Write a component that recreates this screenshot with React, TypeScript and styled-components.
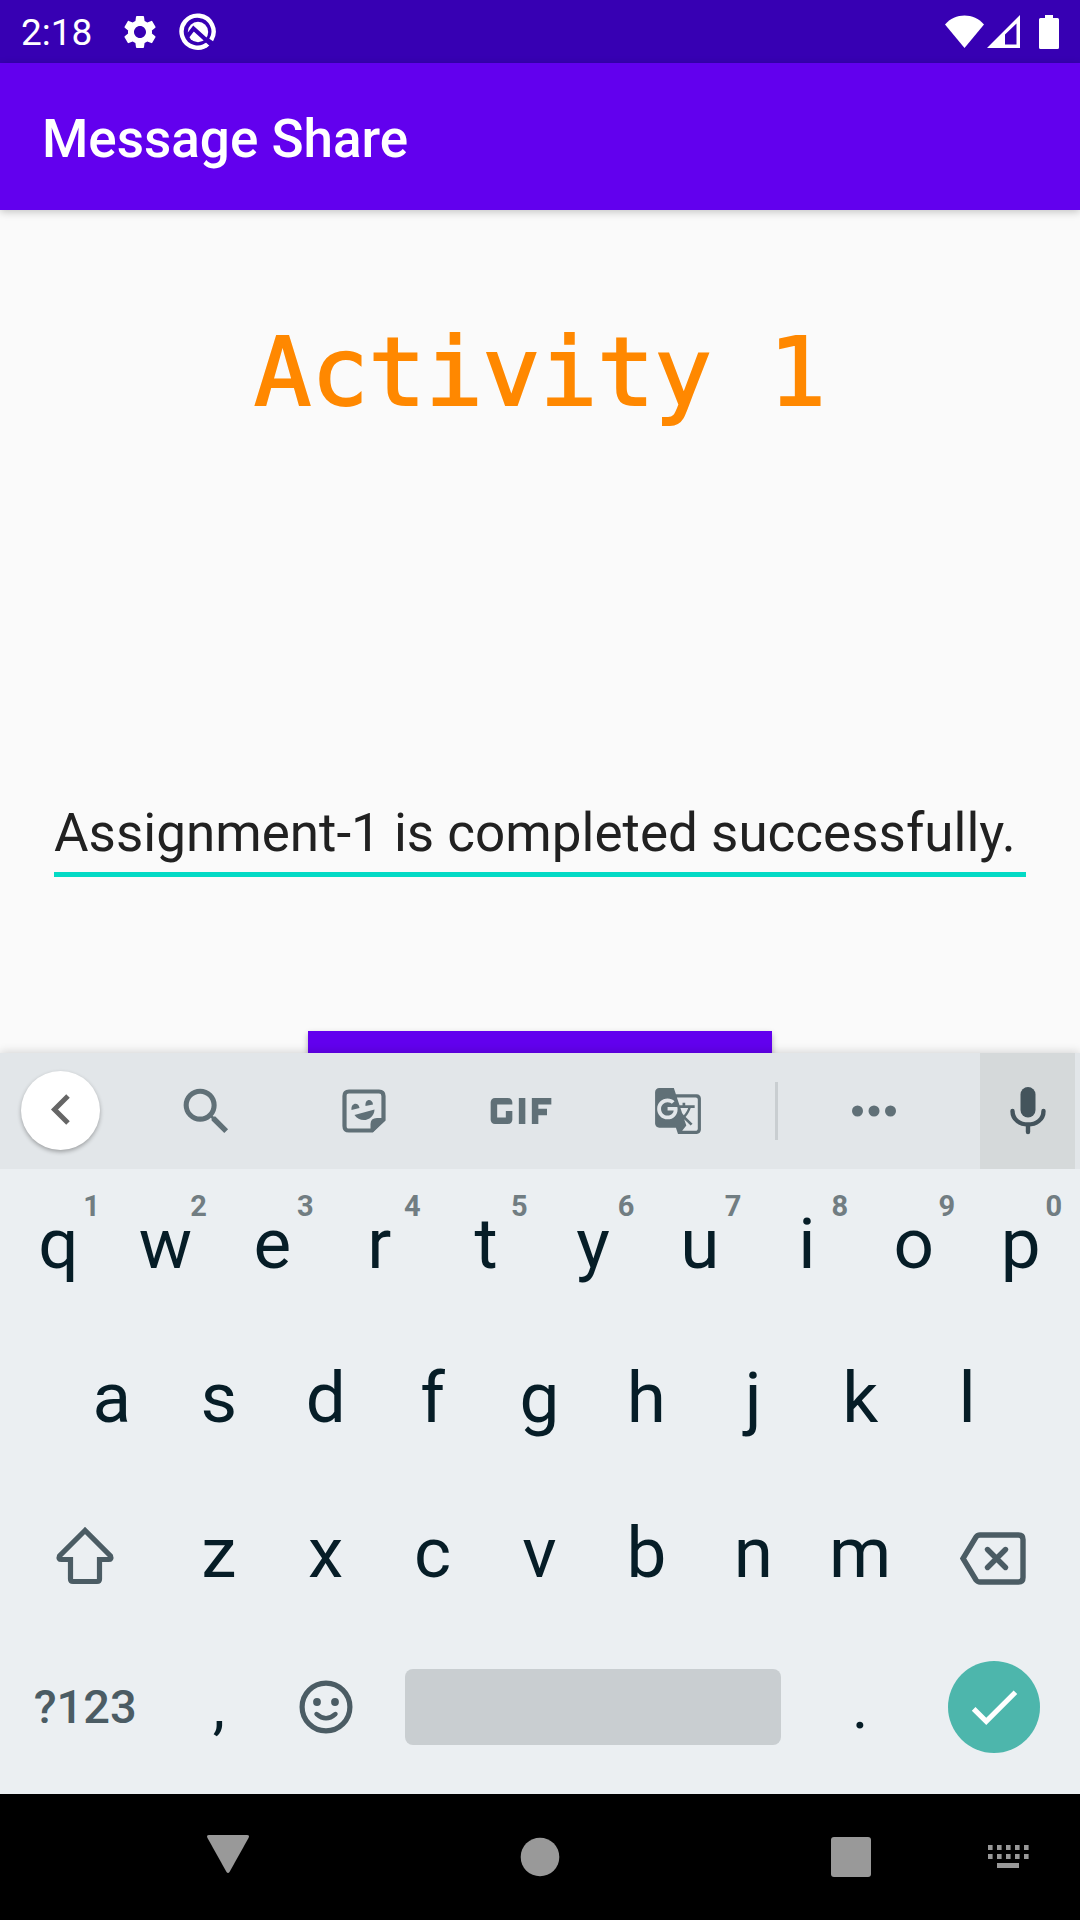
import React, { useState } from "react";
import styled, { createGlobalStyle } from "styled-components";
import { MdCheck, MdGTranslate, MdGif, MdSearch, MdSettings } from "react-icons/md";

const GlobalStyle = createGlobalStyle`
  * { box-sizing: border-box; }
  body { margin: 0; background: #000; }
  button, input { font-family: inherit; }
  svg { display: block; flex: none; }
`;

const Screen = styled.div`
  display: flex;
  flex-direction: column;
  height: 100vh;
  overflow: hidden;
  background: #fafafa;
  font-family: Roboto, "Noto Sans", sans-serif;
`;

const StatusBar = styled.div`
  display: flex;
  flex: none;
  align-items: center;
  height: 63px;
  padding: 0 19px 0 21px;
  background: #3700b3;
  color: #fff;
`;

const Clock = styled.time`
  font-size: 37px;
  line-height: 44px;
  padding-top: 3px;
`;

const StatusIcons = styled.div<{ $end?: boolean }>`
  display: flex;
  align-items: center;
  gap: ${(p) => (p.$end ? "3px" : "19px")};
  margin-left: ${(p) => (p.$end ? "auto" : "28px")};
`;

const AppBar = styled.header`
  position: relative;
  display: flex;
  flex: none;
  align-items: center;
  height: 147px;
  padding: 4px 42px 0;
  background: #6200ee;
  box-shadow: 0 2px 8px rgba(0, 0, 0, 0.22);
`;

const AppTitle = styled.h1`
  margin: 0;
  color: #fff;
  font-size: 53px;
  font-weight: 500;
  line-height: 62px;
`;

const Content = styled.main`
  display: flex;
  flex: 1 1 0;
  flex-direction: column;
  min-height: 0;
  overflow: hidden;
`;

const Heading = styled.h2`
  flex: none;
  margin: 106px 0 0;
  color: #ff8800;
  font-family: "Droid Sans Mono", "DejaVu Sans Mono", monospace;
  font-size: 95px;
  font-weight: 400;
  line-height: 112px;
  text-align: center;
  -webkit-text-stroke: 2px #ff8800;
`;

const MessageField = styled.input`
  flex: none;
  margin: 374px 54px 0;
  padding: 0 0 8px;
  border: 0;
  border-bottom: 5px solid #03dac5;
  border-radius: 0;
  outline: 0;
  background: none;
  color: #212121;
  font-size: 53px;
  line-height: 62px;
  height: 75px;
`;

const SendButton = styled.button`
  flex: none;
  align-self: center;
  width: 43%;
  height: 126px;
  margin-top: 154px;
  border: 0;
  background: #6200ee;
  box-shadow: 0 3px 6px rgba(0, 0, 0, 0.3);
`;

const Keyboard = styled.section`
  position: relative;
  flex: none;
  background: #ebeff2;
  box-shadow: 0 -1px 9px rgba(0, 0, 0, 0.16);
`;

const Toolbar = styled.div`
  display: flex;
  align-items: center;
  height: 116px;
  background: #e2e6e9;
`;

const PlainButton = styled.button`
  display: flex;
  align-items: center;
  justify-content: center;
  padding: 0;
  border: 0;
  background: none;
`;

const CollapseButton = styled(PlainButton)`
  flex: none;
  width: 79px;
  height: 79px;
  margin: 0 28px 2px 21px;
  border-radius: 50%;
  background: #fff;
  box-shadow: 0 2px 4px rgba(0, 0, 0, 0.3);
`;

const Tool = styled(PlainButton)`
  flex: 1 1 0;
  height: 100%;
  color: #607077;
`;

const Divider = styled.span`
  flex: none;
  width: 3px;
  height: 58px;
  margin-left: 18px;
  background: #c9ced1;
`;

const MoreButton = styled(PlainButton)`
  flex: none;
  width: 192px;
  height: 100%;
`;

const MicButton = styled(PlainButton)`
  flex: none;
  width: 95px;
  height: 100%;
  margin: 0 5px 0 10px;
  background: #d5d9da;
`;

const Keys = styled.div`
  display: grid;
  grid-template-rows: repeat(4, 1fr);
  height: 625px;
  padding: 0 6px 7px 5px;
`;

const KeyRow = styled.div<{ $inset?: boolean }>`
  display: flex;
  padding: 0 ${(p) => (p.$inset ? "5%" : "0")};
`;

const Key = styled(PlainButton)<{ $span?: number }>`
  position: relative;
  flex: ${(p) => p.$span ?? 1} 1 0;
  min-width: 0;
  padding-bottom: 5px;
  color: #061d27;
  font-size: 71px;
  line-height: 84px;
`;

const PunctuationKey = styled(Key)`
  font-size: 62px;
`;

const SymbolsKey = styled(Key)`
  color: #4b5c64;
  font-size: 47px;
  font-weight: 500;
`;

const Hint = styled.span`
  position: absolute;
  top: 20px;
  right: 12px;
  color: #717d82;
  font-size: 29px;
  font-weight: 700;
  line-height: 34px;
`;

const SpaceBar = styled.span`
  width: 100%;
  height: 76px;
  margin: 0 26px;
  border-radius: 8px;
  background: #c9ced1;
`;

const EnterCircle = styled.span`
  display: flex;
  align-items: center;
  justify-content: center;
  width: 92px;
  height: 92px;
  border-radius: 50%;
  background: #4db6ac;
  color: #fff;
`;

const NavBar = styled.nav`
  display: grid;
  flex: none;
  grid-template-columns: 144px 1fr 144px;
  height: 126px;
  background: #000;
`;

const NavMain = styled.div`
  display: flex;
  grid-column: 2;
  justify-content: space-between;
  padding: 0 13px 0 12px;
`;

const NavButton = styled(PlainButton)`
  width: 144px;
`;

const ScanIcon = () => (
  <svg width="38" height="38" viewBox="0 0 38 38" fill="none">
    <path d="M29.5 30.3 A16 16 0 1 1 32.2 27" stroke="#fff" strokeWidth="4.4" />
    <circle cx="19" cy="19" r="10.2" fill="#fff" />
    <path d="M8 24 L14.5 15.5 L36 35" stroke="#3700b3" strokeWidth="4.2" />
    <path d="M25.5 33.2 A16 16 0 0 0 27.5 32" stroke="#fff" strokeWidth="4.4" />
  </svg>
);

const WifiIcon = () => (
  <svg width="39" height="34" viewBox="0 0 39 34" fill="#fff">
    <path d="M19.500 33 L0 9.500 C10 -2.500 29 -2.500 39 9.500 Z" />
  </svg>
);

const SignalIcon = () => (
  <svg width="33" height="34" viewBox="0 0 33 34" fill="#fff">
    <path fillRule="evenodd" d="M0 33 L33 0 V33 Z M18 19.500 V29.500 H29.500 V8.500 Z" />
  </svg>
);

const BatteryIcon = () => (
  <svg width="38" height="34" viewBox="0 0 38 34" fill="#fff">
    <path d="M22 0 h8 v3 h4.500 a1.500 1.500 0 0 1 1.500 1.500 v28 a1.500 1.500 0 0 1 -1.500 1.500 h-17 a1.500 1.500 0 0 1 -1.500 -1.500 v-28 a1.500 1.500 0 0 1 1.500 -1.500 h4.500 z" />
  </svg>
);

const ChevronIcon = () => (
  <svg width="40" height="40" viewBox="0 0 40 40" fill="none">
    <path d="M27 6 L13.500 19.500 L27 33" stroke="#666" strokeWidth="5" />
  </svg>
);

const StickerIcon = () => (
  <svg width="44" height="44" viewBox="0 0 44 44">
    <path
      d="M7 2.500 H37 Q41.500 2.500 41.500 7 V30.500 L30 41.500 H7 Q2.500 41.500 2.500 37 V7 Q2.500 2.500 7 2.500 Z"
      fill="none"
      stroke="#607077"
      strokeWidth="4.200"
    />
    <path d="M28.500 42 V35 Q28.500 29 35 29 H42 V31.500 L31 43 Z" fill="#607077" />
    <path d="M9.500 21 C8.500 14 16.500 12.500 17.500 19 Z" fill="#607077" />
    <path d="M23.500 17 C22.500 9.500 30.500 9 31 15.500 Z" fill="#607077" />
    <path d="M12.500 26 L32.500 20.500 C32 32 18 34.500 12.500 26 Z" fill="#607077" />
  </svg>
);

const MoreIcon = () => (
  <svg width="44" height="12" viewBox="0 0 44 12" fill="#607077">
    <circle cx="5.500" cy="6" r="5.500" />
    <circle cx="22" cy="6" r="5.500" />
    <circle cx="38.500" cy="6" r="5.500" />
  </svg>
);

const MicIcon = () => (
  <svg width="36" height="48" viewBox="0 0 36 48" fill="none">
    <rect x="10.500" y="0" width="15" height="30.500" rx="7.500" fill="#44545c" />
    <path
      d="M2.500 24 C2.500 42 33.500 42 33.500 24 M18 38 V45"
      stroke="#44545c"
      strokeWidth="4.400"
      strokeLinecap="round"
    />
  </svg>
);

const ShiftIcon = () => (
  <svg width="60" height="64" viewBox="0 0 60 64" fill="none">
    <path
      d="M30 9.500 L4.500 35 Q3 38.500 6.500 38.500 H15.500 V58 Q15.500 60.500 18 60.500 H42 Q44.500 60.500 44.500 58 V38.500 H53.500 Q57 38.500 55.500 35 Z"
      stroke="#4b5c64"
      strokeWidth="5.200"
    />
  </svg>
);

const BackspaceIcon = () => (
  <svg width="68" height="66" viewBox="1 0 68 66" fill="none" stroke="#4b5c64" strokeWidth="5.400">
    <path d="M21 15 H59.500 Q64 15 64 19.500 V57.500 Q64 62 59.500 62 H21 Q18.500 62 17 60 L4 38.500 L17 17 Q18.500 15 21 15 Z" />
    <path d="M28.500 29.500 L46.500 47.500 M46.500 29.500 L28.500 47.500" strokeLinecap="round" />
  </svg>
);

const SmileIcon = () => (
  <svg width="54" height="54" viewBox="0 0 54 54" fill="none">
    <circle cx="27" cy="27" r="23.900" stroke="#4b5c64" strokeWidth="5.200" />
    <circle cx="18" cy="22" r="3.900" fill="#4b5c64" />
    <circle cx="36" cy="22" r="3.900" fill="#4b5c64" />
    <path d="M17.500 34 Q27 42.500 36.500 34" stroke="#4b5c64" strokeWidth="4.400" strokeLinecap="round" />
  </svg>
);

const BackIcon = () => (
  <svg width="44" height="44" viewBox="0 0 44 44" fill="#999">
    <path d="M3 0 H41 Q44 0 42.500 3 L23.500 37 Q22 39 20.500 37 L1.500 3 Q0 0 3 0 Z" />
  </svg>
);

const HomeIcon = () => (
  <svg width="40" height="40" viewBox="0 0 40 40" fill="#999">
    <circle cx="20" cy="20" r="19.300" />
  </svg>
);

const RecentsIcon = () => (
  <svg width="40" height="40" viewBox="0 0 40 40" fill="#999">
    <rect width="40" height="40" rx="3" />
  </svg>
);

const KeyboardIcon = () => (
  <svg width="42" height="24" viewBox="0 0 42 24" fill="#999">
    {[0, 9].map((y) =>
      [0, 9, 18, 27, 36].map((x) => <rect key={`${x}-${y}`} x={x + 1} y={y} width="4.600" height="5" />)
    )}
    <rect x="10" y="18" width="22" height="5" />
  </svg>
);

export default function App() {
  const [message, setMessage] = useState("Assignment-1 is completed successfully.");
  const type = (text: string) => setMessage((current) => current + text);

  const letterKeys = (letters: string, hints = "") =>
    letters.split("").map((letter, i) => (
      <Key key={letter} type="button" onClick={() => type(letter)}>
        {letter}
        {hints[i] && <Hint>{hints[i]}</Hint>}
      </Key>
    ));

  return (
    <Screen>
      <GlobalStyle />
      <StatusBar>
        <Clock>2:18</Clock>
        <StatusIcons>
          <MdSettings size={40} />
          <ScanIcon />
        </StatusIcons>
        <StatusIcons $end>
          <WifiIcon />
          <SignalIcon />
          <BatteryIcon />
        </StatusIcons>
      </StatusBar>
      <AppBar>
        <AppTitle>Message Share</AppTitle>
      </AppBar>

      <Content>
        <Heading>Activity 1</Heading>
        <MessageField
          aria-label="Message"
          type="text"
          value={message}
          onChange={(e) => setMessage(e.target.value)}
        />
        <SendButton type="button" aria-label="Send" />
      </Content>

      <Keyboard aria-label="Keyboard">
        <Toolbar>
          <CollapseButton type="button" aria-label="Collapse toolbar">
            <ChevronIcon />
          </CollapseButton>
          <Tool type="button" aria-label="Search">
            <MdSearch size={61} />
          </Tool>
          <Tool type="button" aria-label="Stickers">
            <StickerIcon />
          </Tool>
          <Tool type="button" aria-label="GIF">
            <MdGif size={104} />
          </Tool>
          <Tool type="button" aria-label="Translate">
            <MdGTranslate size={50} />
          </Tool>
          <Divider />
          <MoreButton type="button" aria-label="More">
            <MoreIcon />
          </MoreButton>
          <MicButton type="button" aria-label="Voice input">
            <MicIcon />
          </MicButton>
        </Toolbar>

        <Keys>
          <KeyRow>{letterKeys("qwertyuiop", "1234567890")}</KeyRow>
          <KeyRow $inset>{letterKeys("asdfghjkl")}</KeyRow>
          <KeyRow>
            <Key $span={1.5} type="button" aria-label="Shift">
              <ShiftIcon />
            </Key>
            {letterKeys("zxcvbnm")}
            <Key
              $span={1.5}
              type="button"
              aria-label="Backspace"
              onClick={() => setMessage((current) => current.slice(0, -1))}
            >
              <BackspaceIcon />
            </Key>
          </KeyRow>
          <KeyRow>
            <SymbolsKey $span={1.5} type="button">
              ?123
            </SymbolsKey>
            <PunctuationKey type="button" onClick={() => type(",")}>
              ,
            </PunctuationKey>
            <Key type="button" aria-label="Emoji">
              <SmileIcon />
            </Key>
            <Key $span={4} type="button" aria-label="Space" onClick={() => type(" ")}>
              <SpaceBar />
            </Key>
            <PunctuationKey type="button" onClick={() => type(".")}>
              .
            </PunctuationKey>
            <Key $span={1.5} type="button" aria-label="Done">
              <EnterCircle>
                <MdCheck size={62} />
              </EnterCircle>
            </Key>
          </KeyRow>
        </Keys>
      </Keyboard>

      <NavBar aria-label="System navigation">
        <NavMain>
          <NavButton type="button" aria-label="Back">
            <BackIcon />
          </NavButton>
          <NavButton type="button" aria-label="Home">
            <HomeIcon />
          </NavButton>
          <NavButton type="button" aria-label="Recent apps">
            <RecentsIcon />
          </NavButton>
        </NavMain>
        <NavButton type="button" aria-label="Switch keyboard">
          <KeyboardIcon />
        </NavButton>
      </NavBar>
    </Screen>
  );
}
